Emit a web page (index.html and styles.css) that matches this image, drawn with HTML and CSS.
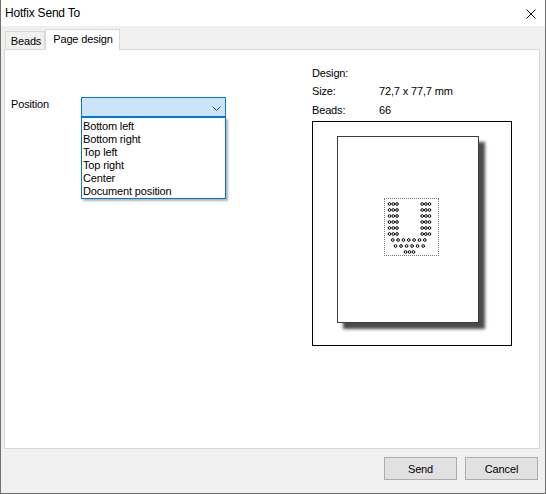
FILE: index.html
```
<!DOCTYPE html>
<html>
<head>
<meta charset="utf-8">
<link rel="stylesheet" href="styles.css">
</head>
<body>
<div class="window">
  <div class="titlebar">
    <span class="title">Hotfix Send To</span>
    <svg class="close" width="10" height="10" viewBox="0 0 10 10"><path d="M0.5 0.5 L9.5 9.5 M9.5 0.5 L0.5 9.5" stroke="#000" stroke-width="1" fill="none"/></svg>
  </div>
  <div class="client">
    <div class="tabs">
      <div class="tab">Beads</div>
      <div class="tab active">Page design</div>
    </div>
    <div class="panel">
      <div class="left">
        <div class="field">
          <span class="label">Position</span>
          <div class="combo-wrap">
            <div class="combo">
              <svg class="chev" width="9" height="5" viewBox="0 0 9 5"><polyline points="0.5,0.5 4.5,4.5 8.5,0.5" fill="none" stroke="#444" stroke-width="1"/></svg>
            </div>
            <ul class="list">
              <li>Bottom left</li>
              <li>Bottom right</li>
              <li>Top left</li>
              <li>Top right</li>
              <li>Center</li>
              <li>Document position</li>
            </ul>
          </div>
        </div>
      </div>
      <div class="right">
        <div class="info r1"><span class="k">Design:</span><span class="v"></span></div>
        <div class="info r2"><span class="k">Size:</span><span class="v">72,7 x 77,7 mm</span></div>
        <div class="info r3"><span class="k">Beads:</span><span class="v">66</span></div>
        <div class="preview">
          <div class="page">
            <div class="design">
              <svg width="53" height="56" viewBox="0 0 53 56" fill="none" stroke="#000" stroke-width="1">
                <g>
                  <circle cx="4.5" cy="5" r="1.35"/><circle cx="8.25" cy="5" r="1.35"/><circle cx="12" cy="5" r="1.35"/><circle cx="37.2" cy="5" r="1.35"/><circle cx="40.85" cy="5" r="1.35"/><circle cx="44.5" cy="5" r="1.35"/>
                  <circle cx="4.5" cy="11" r="1.35"/><circle cx="8.25" cy="11" r="1.35"/><circle cx="12" cy="11" r="1.35"/><circle cx="37.2" cy="11" r="1.35"/><circle cx="40.85" cy="11" r="1.35"/><circle cx="44.5" cy="11" r="1.35"/>
                  <circle cx="4.5" cy="17" r="1.35"/><circle cx="8.25" cy="17" r="1.35"/><circle cx="12" cy="17" r="1.35"/><circle cx="37.2" cy="17" r="1.35"/><circle cx="40.85" cy="17" r="1.35"/><circle cx="44.5" cy="17" r="1.35"/>
                  <circle cx="4.5" cy="23" r="1.35"/><circle cx="8.25" cy="23" r="1.35"/><circle cx="12" cy="23" r="1.35"/><circle cx="37.2" cy="23" r="1.35"/><circle cx="40.85" cy="23" r="1.35"/><circle cx="44.5" cy="23" r="1.35"/>
                  <circle cx="4.5" cy="29" r="1.35"/><circle cx="8.25" cy="29" r="1.35"/><circle cx="12" cy="29" r="1.35"/><circle cx="37.2" cy="29" r="1.35"/><circle cx="40.85" cy="29" r="1.35"/><circle cx="44.5" cy="29" r="1.35"/>
                  <circle cx="4.5" cy="35" r="1.35"/><circle cx="8.25" cy="35" r="1.35"/><circle cx="12" cy="35" r="1.35"/><circle cx="37.2" cy="35" r="1.35"/><circle cx="40.85" cy="35" r="1.35"/><circle cx="44.5" cy="35" r="1.35"/>
                  <circle cx="7.8" cy="41" r="1.35"/><circle cx="13.1" cy="41" r="1.35"/><circle cx="18.5" cy="41" r="1.35"/><circle cx="23.8" cy="41" r="1.35"/><circle cx="29.1" cy="41" r="1.35"/><circle cx="34.5" cy="41" r="1.35"/><circle cx="39.8" cy="41" r="1.35"/>
                  <circle cx="10.5" cy="47" r="1.35"/><circle cx="16" cy="47" r="1.35"/><circle cx="21.6" cy="47" r="1.35"/><circle cx="27.1" cy="47" r="1.35"/><circle cx="32.6" cy="47" r="1.35"/><circle cx="38.2" cy="47" r="1.35"/>
                  <circle cx="20.5" cy="53" r="1.35"/><circle cx="24.5" cy="53" r="1.35"/><circle cx="28.5" cy="53" r="1.35"/>
                </g>
              </svg>
            </div>
          </div>
        </div>
      </div>
    </div>
    <div class="buttons">
      <button class="btn">Send</button>
      <button class="btn">Cancel</button>
    </div>
  </div>
</div>
</body>
</html>
```

FILE: styles.css
```
* { box-sizing: border-box; }

body {
  margin: 0;
  width: 546px;
  height: 494px;
  overflow: hidden;
  font-family: "Liberation Sans", Arial, sans-serif;
  font-size: 11px;
  letter-spacing: -0.15px;
  color: #000;
  background: #fff;
}

.window {
  width: 546px;
  height: 494px;
  border: 1px solid #707070;
  border-top: none;
  display: flex;
  flex-direction: column;
  background: #f0f0f0;
}

.titlebar {
  height: 26px;
  flex: none;
  background: #fff;
  display: flex;
  align-items: center;
  justify-content: space-between;
  padding: 0 9px 0 4px;
}

.title {
  font-size: 12px;
  letter-spacing: -0.2px;
}

.close { display: block; margin-top: 1px; }

.client {
  flex: 1;
  display: flex;
  flex-direction: column;
  padding: 3px 5px 13px 3px;
}

.tabs {
  display: flex;
  align-items: flex-end;
  height: 20px;
  padding-left: 1px;
  position: relative;
  z-index: 1;
}

.tab {
  height: 18px;
  width: 40px;
  border: 1px solid #d9d9d9;
  border-bottom: none;
  background: #f0f0f0;
  line-height: 19px;
  text-align: center;
  padding-left: 2px;
}

.tab.active {
  width: 75px;
  height: 21px;
  margin-bottom: -1px;
  background: #fff;
  line-height: 18px;
  padding-left: 1px;
}

.panel {
  height: 400px;
  border: 1px solid #d9d9d9;
  background: #fff;
  display: flex;
}

.left {
  width: 307px;
  padding: 47px 0 0 6px;
}

.field {
  display: flex;
  align-items: flex-start;
}

.label {
  width: 70px;
  line-height: 13px;
  margin-top: 1px;
}

.combo-wrap {
  position: relative;
  width: 145px;
}

.combo {
  height: 20px;
  border: 1px solid #0078d7;
  background: #cce4f7;
  display: flex;
  align-items: center;
  justify-content: flex-end;
  padding-right: 4px;
}

.chev { display: block; margin-top: 2px; }

.list {
  position: absolute;
  top: 100%;
  left: 0;
  width: 145px;
  margin: 0;
  padding: 2px 0 0 0;
  list-style: none;
  background: #fff;
  border: 1px solid #0078d7;
  box-shadow: 2px 2px 2px rgba(0, 0, 0, 0.3);
}

.list li {
  height: 13px;
  line-height: 13px;
  padding-left: 1px;
  white-space: nowrap;
}

.right {
  padding-top: 17px;
}

.info {
  display: flex;
  height: 13px;
  line-height: 13px;
}

.info.r1 { margin-bottom: 5px; }
.info.r2 { margin-bottom: 6px; }
.info.r3 { margin-bottom: 4px; }

.k { width: 67px; }

.preview {
  width: 200px;
  height: 225px;
  border: 1px solid #000;
  padding: 14px 0 0 24px;
}

.page {
  width: 142px;
  height: 187px;
  border: 1px solid #3c3c3c;
  background: #fff;
  box-shadow: 6px 6px 3px rgba(30, 30, 30, 0.8);
  padding: 61px 0 0 46px;
}

.design {
  width: 55px;
  height: 58px;
  border: 1px dotted #7a7a7a;
}

.design svg { display: block; }

.buttons {
  margin-top: 8px;
  display: flex;
  justify-content: flex-end;
  gap: 8px;
  padding-right: 2px;
}

.btn {
  width: 73px;
  height: 23px;
  border: 1px solid #adadad;
  background: #e1e1e1;
  font: inherit;
  letter-spacing: inherit;
  color: #000;
  padding: 0;
}
```
